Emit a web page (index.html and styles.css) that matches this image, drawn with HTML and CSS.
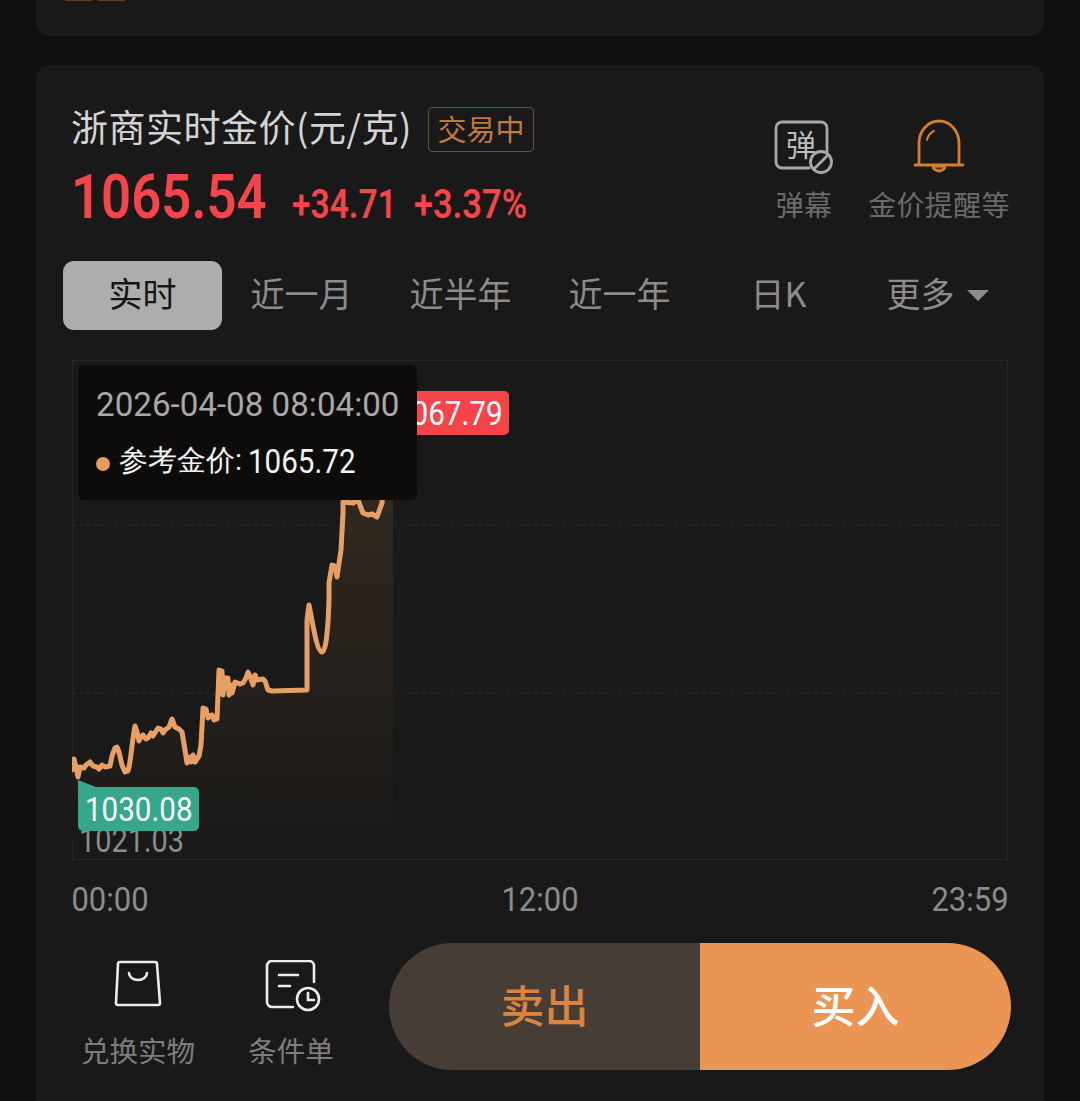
FILE: index.html
```html
<!DOCTYPE html>
<html lang="zh">
<head>
<meta charset="utf-8">
<title>浙商实时金价</title>
<link rel="stylesheet" href="styles.css">
</head>
<body>
<div class="page">
  <div class="top-card"><div class="top-stub"><i></i><i></i></div></div>
  <section class="card">
    <header class="head">
      <div class="head-left">
        <div class="title-row">
          <h1 class="title">浙商实时金价(元/克)</h1>
          <span class="tag">交易中</span>
        </div>
        <div class="price-row">
          <span class="price">1065.54</span>
          <span class="delta delta-a">+34.71</span>
          <span class="delta delta-b">+3.37%</span>
        </div>
      </div>
      <div class="head-right">
        <div class="action action-a">
          <svg class="ic" width="60" height="54" viewBox="0 0 60 54" fill="none">
            <path d="M35 48H8a6 6 0 0 1-6-6V8a6 6 0 0 1 6-6H47a6 6 0 0 1 6 6V32" stroke="#a8a8a8" stroke-width="2.8" stroke-linecap="round"/>
            <text x="12" y="36" class="ic-char">弹</text>
            <circle cx="47" cy="42" r="10.5" fill="#191919" stroke="#a8a8a8" stroke-width="2.8"/>
            <path d="M40 49L54 35" stroke="#a8a8a8" stroke-width="2.8"/>
          </svg>
          <span class="action-label">弹幕</span>
        </div>
        <div class="action action-b">
          <svg class="ic bell" width="52" height="54" viewBox="0 0 52 54" fill="none" stroke="#d67e2c" stroke-width="2.8" stroke-linecap="round">
            <path d="M2 46H50"/>
            <path d="M6 45V24a20 22 0 0 1 40 0V45"/>
            <path d="M20 47a6 5 0 0 0 12 0Z" fill="#d67e2c" fill-opacity=".25"/>
            <path d="M14 21a13 13 0 0 1 7-9" stroke-width="2"/>
          </svg>
          <span class="action-label">金价提醒等</span>
        </div>
      </div>
    </header>

    <nav class="tabs">
      <span class="tab tab-on">实时</span>
      <span class="tab">近一月</span>
      <span class="tab">近半年</span>
      <span class="tab">近一年</span>
      <span class="tab">日K</span>
      <span class="tab">更多<i class="caret"></i></span>
    </nav>

    <div class="chart">
      <svg class="plot" width="936" height="500" viewBox="72 360 936 500" fill="none">
        <defs>
          <linearGradient id="fade" x1="0" y1="0" x2="0" y2="1">
            <stop offset="0" stop-color="#33291f"/>
            <stop offset="1" stop-color="#1a1918"/>
          </linearGradient>
        </defs>
        <path d="M72 525H1008M72 693H1008M72 360H1008" stroke="#2a2a2a" stroke-width="1" stroke-dasharray="4 3"/>
        <path d="M72 770L74 759L78 777L80 767L90 762L97 767L102 765L110 766L115 748L119 752L125 772L128 771L135 726L139 741L143 735L148 738L158 728L165 730L172 719L175 727L182 732L187 763L190 755L195 762L200 752L203 708L208 718L212 715L217 719L219 670L223 695L228 678L232 693L235 682L243 683L248 672L253 685L255 675L263 679L268 690L307 690L307 620L309 605L322 652L327 643L329 600L329 583L332 565L337 577L343 513L343 480L393 480L393 840L72 840Z" fill="url(#fade)"/>
        <path class="line" d="M72 770L74 759L76 767L78 777L80 767L84 768L86 765L90 762L93 766L97 767L99 769L102 765L105 767L110 766L112 756L115 748L117 747L119 752L122 765L125 772L128 771C131 762 132 740 135 726L137 732L139 741L141 737L143 735L146 739L148 738L151 733L153 736L158 728L161 729L163 733L165 730L169 727L172 719L175 727L179 729L182 732L185 750L187 763L189 757L191 762L193 755L195 762L199 756L201 745L203 708L206 709L208 718L210 716L212 715L214 720L217 719L219 670L222 671L223 695L225 678L228 678L229 695L231 685L232 693L235 682L240 684L243 683L246 678L248 672L250 676L253 685L255 675L257 680L263 679L265 681L268 690L272 691L307 690L307 620L309 605C313 625 317 652 322 652C326 652 328 630 329 600L329 583L332 565L335 566L337 577L341 550L343 513L343 502L353 503L358 500L363 513L368 515L372 514L377 517L382 503L384 480"/>
      </svg>
      <span class="low"><span class="num-low">1021.03</span></span>
      <span class="flag flag-green"><span class="num">1030.08</span></span>
      <span class="flag flag-red"><span class="num">1067.79</span></span>
      <div class="tip">
        <div class="tip-time">2026-04-08 08:04:00</div>
        <div class="tip-row"><i class="dot"></i>参考金价:<span class="tip-val">1065.72</span></div>
      </div>
    </div>

    <div class="axis"><span>00:00</span><span>12:00</span><span>23:59</span></div>

    <footer class="foot">
      <div class="foot-item foot-a">
        <svg width="50" height="48" viewBox="0 0 50 48" fill="none" stroke="#ececec" stroke-width="2.6" stroke-linecap="round" stroke-linejoin="round">
          <path d="M7 2H42a2 2 0 0 1 2 2L47 43a2 2 0 0 1-2 2H5a2 2 0 0 1-2-2L5 4a2 2 0 0 1 2-2Z"/>
          <path d="M16 13a9 7 0 0 0 18 0"/>
        </svg>
        <span class="foot-label">兑换实物</span>
      </div>
      <div class="foot-item foot-b">
        <svg width="56" height="54" viewBox="0 0 56 54" fill="none" stroke="#ececec" stroke-width="2.6" stroke-linecap="round">
          <path d="M28 47H7a5 5 0 0 1-5-5V6a5 5 0 0 1 5-5H44a5 5 0 0 1 5 5V22"/>
          <path d="M14 15H33M14 26H25"/>
          <circle cx="43" cy="39" r="11"/>
          <path d="M43 33V40H49"/>
        </svg>
        <span class="foot-label">条件单</span>
      </div>
      <div class="trade">
        <span class="trade-btn sell">卖出</span>
        <span class="trade-btn buy">买入</span>
      </div>
    </footer>
  </section>
</div>
</body>
</html>
```
FILE: styles.css
```css
* { box-sizing: border-box; }
html, body { margin: 0; padding: 0; background: #101010; }
body { font-family: "Noto Sans CJK SC", "Liberation Sans", sans-serif; }
.page { width: 1080px; height: 1101px; overflow: hidden; padding: 0 36px; display: flex; flex-direction: column; gap: 29px; }
.top-card { height: 36px; flex: none; background: #191919; border-radius: 0 0 14px 14px; }
.top-stub { display: flex; gap: 6px; padding-left: 29px; }
.top-stub i { width: 27px; height: 1px; background: #6b3d18; }
.card { flex: none; height: 1040px; background: #191919; border-radius: 14px 14px 0 0; display: flex; flex-direction: column; }

.head { display: flex; justify-content: space-between; padding: 33px 34px 0 35px; height: 196px; }
.title-row { display: flex; align-items: center; height: 56px; }
.title { margin: 0; font-size: 37px; font-weight: 400; color: #d4d4d4; line-height: 56px; white-space: nowrap; letter-spacing: .5px; }
.tag { margin: 7px 0 0 16px; width: 106px; height: 45px; border: 1px solid #6e5037; border-radius: 4px; color: #c17a3c; font-size: 29px; line-height: 40px; text-align: center; }
.price-row { display: flex; align-items: baseline; height: 74px; margin-top: 6px; font-family: "Roboto", sans-serif; color: #f5444a; }
.price, .delta { display: inline-block; white-space: nowrap; transform-origin: left center; }
.price { width: 194px; font-size: 62px; font-weight: 600; line-height: 74px; transform: scaleX(.85); }
.delta { font-size: 40px; font-weight: 600; }
.delta-a { width: 103px; margin-left: 27px; transform: scaleX(.84); }
.delta-b { width: 113px; margin-left: 19px; transform: scaleX(.86); }

.head-right { display: flex; align-items: flex-start; padding-top: 22px; }
.action { display: flex; flex-direction: column; align-items: center; }
.action-a { width: 60px; margin-right: 34px; }
.action-b { width: 142px; }
.ic { display: block; }
.bell { margin: -1px 0 1px; }
.ic-char { font-size: 30px; fill: #bdbdbd; font-family: "Noto Sans CJK SC", sans-serif; }
.action-label { margin-top: 10px; font-size: 28px; line-height: 40px; color: #6b6b6b; white-space: nowrap; letter-spacing: .3px; }

.tabs { display: grid; grid-template-columns: repeat(6, 159px); margin-left: 27px; height: 69px; }
.tab { display: flex; align-items: center; justify-content: center; padding-bottom: 6px; font-size: 34px; color: #8c8c8c; white-space: nowrap; }
.tab-on { background: #adadae; color: #151515; border-radius: 11px; }
.caret { width: 0; height: 0; margin: 6px 0 0 12px; border-left: 11px solid transparent; border-right: 11px solid transparent; border-top: 11px solid #8c8c8c; }

.chart { position: relative; margin: 30px 0 0 36px; width: 936px; height: 500px; border: 1px solid #262626; flex: none; font-family: "Roboto", sans-serif; }
.plot { position: absolute; left: -1px; top: -1px; }
.line { stroke: #e6a066; stroke-width: 5; stroke-linejoin: round; stroke-linecap: round; }
.low { position: absolute; left: 6px; top: 457px; font-size: 34px; line-height: 44px; color: #8c8c8c; }
.num-low { display: inline-block; width: 101px; white-space: nowrap; transform: scaleX(.85); transform-origin: left center; }
.flag { position: absolute; display: flex; justify-content: flex-end; height: 44px; border-radius: 5px; color: #fff; font-size: 34px; line-height: 44px; white-space: nowrap; }
.num { display: block; width: 106px; flex: none; white-space: nowrap; transform: scaleX(.87); transform-origin: left center; }
.flag-green { left: 5px; top: 426px; width: 121px; padding-right: 8px; background: #35a78a; border-top-left-radius: 0; }
.flag-green::before { content: ""; position: absolute; left: 0; top: -7px; border-right: 18px solid transparent; border-bottom: 7px solid #35a78a; }
.flag-red { left: 300px; top: 30px; width: 136px; padding-right: 8px; background: #f5444a; }

.tip { position: absolute; left: 5px; top: 4px; width: 339px; height: 135px; background: #0d0c0b; border-radius: 6px; padding: 16px 0 0 18px; }
.tip-time { font-size: 34px; line-height: 46px; color: #a8a8a8; white-space: nowrap; transform: scaleX(.975); transform-origin: left center; }
.tip-row { display: flex; align-items: center; margin-top: 11px; height: 46px; font-size: 29px; color: #f2f2f2; white-space: nowrap; }
.dot { width: 14px; height: 14px; border-radius: 50%; background: #e89b5f; margin-right: 9px; margin-top: 6px; }
.tip-val { display: block; font-family: "Roboto", sans-serif; font-size: 34px; margin-left: 6px; color: #f2f2f2; transform: scaleX(.87); transform-origin: left center; }

.axis { display: flex; justify-content: space-between; margin: 16px 0 0 36px; width: 936px; font-family: "Roboto", sans-serif; font-size: 34px; line-height: 46px; color: #8c8c8c; }
.axis span { display: flex; justify-content: center; width: 76px; flex: none; white-space: nowrap; transform: scaleX(.91); }

.foot { display: flex; align-items: flex-start; margin-top: 21px; }
.foot-item { display: flex; flex-direction: column; align-items: center; flex: none; padding-top: 17px; }
.foot-a { width: 114px; margin-left: 45px; }
.foot-b { width: 84px; margin-left: 54px; }
.foot-b svg { margin-left: 4px; }
.foot-a svg { margin: 0 0 6px; }
.foot-label { margin-top: 15px; font-size: 28.5px; line-height: 42px; color: #7d7d7d; white-space: nowrap; }
.trade { display: flex; margin-left: 56px; width: 622px; height: 127px; border-radius: 64px; overflow: hidden; flex: none; }
.trade-btn { flex: 1; display: flex; align-items: center; justify-content: center; padding-bottom: 6px; font-size: 44px; font-weight: 500; }
.sell { background: #473d37; color: #d9843f; }
.buy { background: #eb9554; color: #fff; }
```
